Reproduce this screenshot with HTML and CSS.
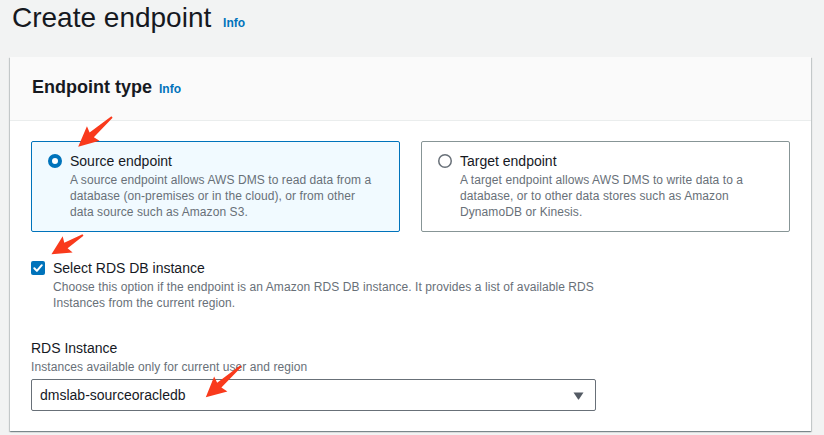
FILE: index.html
```html
<!DOCTYPE html>
<html lang="en">
<head>
<meta charset="utf-8">
<title>Create endpoint</title>
<link rel="stylesheet" href="styles.css">
</head>
<body>
<div class="page">
  <h1 class="title">Create endpoint <a class="info" href="#">Info</a></h1>
  <section class="card">
    <header class="card-head">
      <h2 class="card-title">Endpoint type <a class="info" href="#">Info</a></h2>
    </header>
    <div class="card-body">
      <div class="tiles">
        <div class="tile tile-selected">
          <div class="tile-row">
            <svg class="radio" width="14" height="14" viewBox="0 0 14 14"><circle cx="7" cy="7" r="5" fill="#fff" stroke="#0073bb" stroke-width="4"/></svg>
            <div class="tile-text">
              <div class="tile-label">Source endpoint</div>
              <div class="desc">A source endpoint allows AWS DMS to read data from a database (on-premises or in the cloud), or from other data source such as Amazon S3.</div>
            </div>
          </div>
        </div>
        <div class="tile">
          <div class="tile-row">
            <svg class="radio" width="14" height="14" viewBox="0 0 14 14"><circle cx="7" cy="7" r="6.25" fill="#fff" stroke="#687078" stroke-width="1.5"/></svg>
            <div class="tile-text">
              <div class="tile-label">Target endpoint</div>
              <div class="desc">A target endpoint allows AWS DMS to write data to a database, or to other data stores such as Amazon DynamoDB or Kinesis.</div>
            </div>
          </div>
        </div>
      </div>

      <div class="check-field">
        <svg class="checkbox" width="14" height="14" viewBox="0 0 14 14"><rect x="0" y="0" width="14" height="14" rx="2" fill="#0073bb"/><polyline points="3.3,7.3 5.9,9.9 10.8,4.2" fill="none" stroke="#fff" stroke-width="2" stroke-linecap="round" stroke-linejoin="round"/></svg>
        <div class="check-text">
          <div class="check-label">Select RDS DB instance</div>
          <div class="desc check-desc">Choose this option if the endpoint is an Amazon RDS DB instance. It provides a list of available RDS Instances from the current region.</div>
        </div>
      </div>

      <div class="field">
        <div class="field-label">RDS Instance</div>
        <div class="desc">Instances available only for current user and region</div>
        <div class="select">
          <span class="select-value">dmslab-sourceoracledb</span>
          <svg class="caret" width="11" height="8" viewBox="0 0 11 8"><path d="M0.5 0.5 H10.5 L6 7.3 Q5.5 8 5 7.3 Z" fill="#545b64"/></svg>
        </div>
      </div>
    </div>
  </section>
</div>
<svg class="annotations" width="824" height="435" viewBox="0 0 824 435">
  <g fill="#f93a1c">
    <polygon transform="translate(112,117) rotate(138.7)" points="0,-0.9 27,-3.2 25,-9.5 45,0 25,9.5 27,3.2 0,0.9"/>
    <polygon transform="translate(83,235) rotate(148.5)" points="0,-0.9 20,-3.2 18,-9.5 37,0 18,9.5 20,3.2 0,0.9"/>
    <polygon transform="translate(241,366) rotate(138.5)" points="0,-0.9 29,-3.2 27,-10 47,0 27,10 29,3.2 0,0.9"/>
  </g>
</svg>
</body>
</html>
```

FILE: styles.css
```css
* { box-sizing: border-box; }

html, body {
  margin: 0;
  padding: 0;
}

body {
  background: #f2f3f3;
  font-family: "Liberation Sans", Arial, sans-serif;
  color: #16191f;
  width: 824px;
  height: 435px;
  overflow: hidden;
  position: relative;
}

.page {
  padding: 0 13px 0 10px;
}

.title {
  margin: 0;
  padding-left: 2px;
  height: 36px;
  font-size: 28px;
  font-weight: 400;
  line-height: 36px;
  color: #16191f;
}

.info {
  font-size: 12px;
  line-height: 1;
  font-weight: 700;
  color: #0073bb;
  text-decoration: none;
  margin-left: 2px;
}

.title .info { margin-left: 4px; }

.card {
  margin-top: 21px;
  background: #fff;
  box-shadow: 0 1px 1px 0 rgba(0, 28, 36, 0.3), 1px 1px 1px 0 rgba(0, 28, 36, 0.15), -1px 1px 1px 0 rgba(0, 28, 36, 0.15);
}

.card-head {
  background: #fafafa;
  border-bottom: 1px solid #eaeded;
  height: 64px;
  padding: 19px 22px 0;
}

.card-title {
  margin: 0;
  height: 22px;
  font-size: 18px;
  font-weight: 700;
  line-height: 22px;
}

.card-body {
  padding: 20px 21px 20px 21px;
}

.tiles {
  display: grid;
  grid-template-columns: 369px 369px;
  column-gap: 21px;
}

.tile {
  border: 1px solid #879596;
  border-radius: 2px;
  background: #fff;
  padding: 8px 16px 11px;
  height: 91px;
}

.tile-selected {
  border-color: #0073bb;
  background: #f1faff;
}

.tile-row {
  display: flex;
  gap: 8px;
}

.radio {
  flex: none;
  margin-top: 4px;
}

.tile-text {
  max-width: 306px;
}

.tile-label {
  font-size: 14px;
  line-height: 22px;
}

.desc {
  font-size: 12px;
  line-height: 16px;
  color: #687078;
  letter-spacing: 0.08px;
}

.check-field {
  display: flex;
  gap: 8px;
  margin-top: 26px;
}

.checkbox {
  flex: none;
  margin-top: 3px;
}

.check-label {
  font-size: 14px;
  line-height: 20px;
}

.check-desc {
  width: 560px;
  margin-top: 2px;
  line-height: 15.5px;
}

.field {
  margin-top: 26px;
}

.field-label {
  font-size: 14px;
  line-height: 22px;
}

.select {
  margin-top: 4px;
  width: 565px;
  height: 32px;
  border: 1px solid #687078;
  border-radius: 2px;
  background: #fff;
  display: flex;
  align-items: center;
  justify-content: space-between;
  padding: 0 11px 0 8px;
}

.select-value {
  font-size: 14px;
  color: #16191f;
}

.caret { flex: none; margin-top: 1px; }

.annotations {
  position: absolute;
  top: 0;
  left: 0;
  pointer-events: none;
}
```
